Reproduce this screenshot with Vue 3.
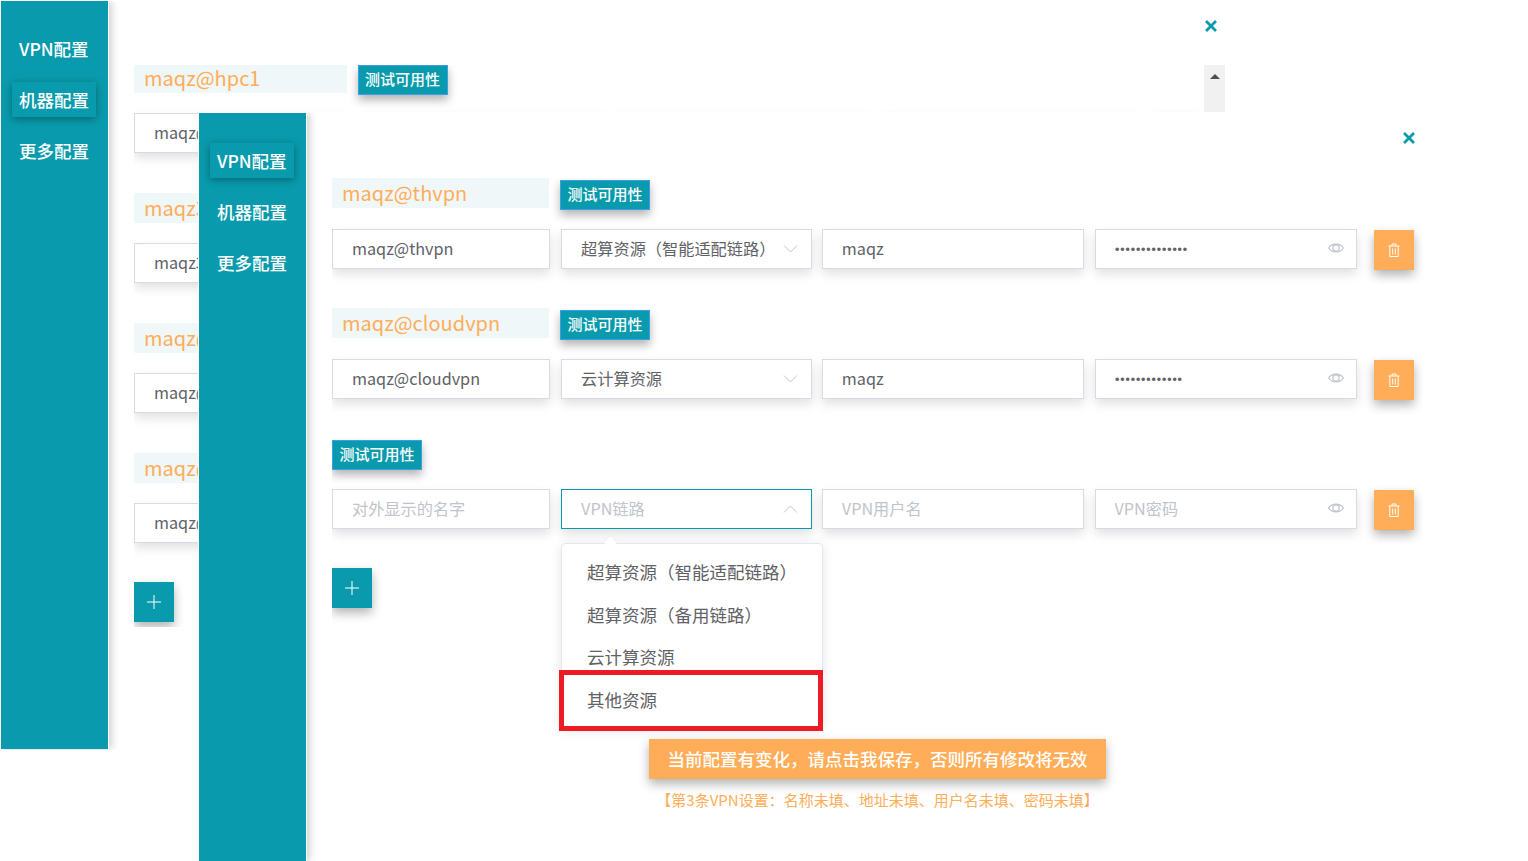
<template>
  <div class="desktop">
    <section v-for="win in windows" :key="win.id" class="win" :class="win.id">
      <aside class="sidebar">
        <div
          v-for="(tab, i) in tabs"
          :key="tab"
          class="tab"
          :class="{ active: i === win.activeTab }"
        >
          {{ tab }}
        </div>
      </aside>

      <div class="main">
        <header class="head">
          <svg class="close" viewBox="0 0 12 12" width="12" height="12">
            <path d="M1 1l10 10M11 1L1 11" fill="none" stroke="#099bad" stroke-width="2.800" />
          </svg>
        </header>

        <div class="scroller">
          <div class="content">
            <div v-for="row in win.rows" :key="row.id" class="row">
              <div class="row-head">
                <div v-if="row.name" class="title">{{ row.name }}</div>
                <button class="test-btn" type="button">测试可用性</button>
              </div>
              <div class="fields">
                <input class="field name" type="text" readonly :value="row.name" placeholder="对外显示的名字" />
                <div class="select-wrap">
                  <input
                    class="field"
                    :class="{ focused: row.open }"
                    type="text"
                    readonly
                    :value="row.link"
                    placeholder="VPN链路"
                  />
                  <svg class="chevron" viewBox="0 0 15 8" width="15" height="8">
                    <path :d="row.open ? 'M1 7.500L7.500 1l6.500 6.500' : 'M1 .5l6.500 6.500L14 .5'" fill="none" stroke="#c0c4cc" />
                  </svg>
                </div>
                <input class="field user" type="text" readonly :value="row.user" placeholder="VPN用户名" />
                <div class="pass-wrap">
                  <input class="field pass" type="password" readonly :value="row.pass" placeholder="VPN密码" />
                  <svg class="eye" viewBox="0 0 16 12" width="16" height="12">
                    <path d="M.6 6C4 .8 12 .8 15.400 6 12 11.200 4 11.200 .6 6z" fill="none" stroke="#c0c4cc" stroke-width="1.200" />
                    <circle cx="8" cy="6" r="3.200" fill="none" stroke="#c0c4cc" stroke-width="1.200" />
                  </svg>
                </div>
                <button class="del-btn" type="button">
                  <svg viewBox="0 0 12 14" width="12" height="14">
                    <path
                      d="M.5 3h11M4 3V1h4v2M1.800 3v10.500h8.400V3M4.700 5.500v6M7.300 5.500v6"
                      fill="none"
                      stroke="#fff"
                    />
                  </svg>
                </button>
              </div>
            </div>
            <button class="add-btn" type="button">
              <svg viewBox="0 0 14 14" width="14" height="14">
                <path d="M7 0v14M0 7h14" fill="none" stroke="#fff" />
              </svg>
            </button>
          </div>
          <div v-if="win.scrollbar" class="scrollbar"><i></i></div>
        </div>

        <div v-if="win.footer" class="footer">
          <button class="save-btn" type="button">当前配置有变化，请点击我保存，否则所有修改将无效</button>
          <p class="errors">【第3条VPN设置：名称未填、地址未填、用户名未填、密码未填】</p>
        </div>
      </div>

      <template v-if="win.footer">
        <ul class="dropdown">
          <li v-for="opt in linkOptions" :key="opt">{{ opt }}</li>
        </ul>
        <div class="highlight"></div>
      </template>
    </section>
  </div>
</template>

<script setup>
const tabs = ["VPN配置", "机器配置", "更多配置"];

const linkOptions = [
  "超算资源（智能适配链路）",
  "超算资源（备用链路）",
  "云计算资源",
  "其他资源",
];

const windows = [
  {
    id: "back",
    activeTab: 1,
    scrollbar: true,
    footer: false,
    rows: [
      { id: 1, name: "maqz@hpc1", link: "超算资源（智能适配链路）", user: "maqz", pass: "maqz12345678" },
      { id: 2, name: "maqz3", link: "超算资源（备用链路）", user: "maqz", pass: "maqz12345678" },
      { id: 3, name: "maqz@thvpn", link: "超算资源（智能适配链路）", user: "maqz", pass: "maqz12345678" },
      { id: 4, name: "maqz@cloudvpn", link: "云计算资源", user: "maqz", pass: "maqz12345678" },
    ],
  },
  {
    id: "front",
    activeTab: 0,
    scrollbar: false,
    footer: true,
    rows: [
      { id: 1, name: "maqz@thvpn", link: "超算资源（智能适配链路）", user: "maqz", pass: "maqz@thvpn1234" },
      { id: 2, name: "maqz@cloudvpn", link: "云计算资源", user: "maqz", pass: "maqz@cloud123" },
      { id: 3, name: "", link: "", user: "", pass: "", open: true },
    ],
  },
];
</script>

<style scoped>
.desktop {
  position: relative;
  height: 861px;
  overflow: hidden;
  background: #fff;
  font-family: "Noto Sans CJK SC", "Noto Sans", sans-serif;
}

.win {
  position: absolute;
  display: flex;
  align-items: flex-start;
  box-sizing: border-box;
  width: 1237px;
  height: 751px;
  overflow: hidden;
  border: 1px solid #fff;
  background: #fff;
}

.back {
  left: 0;
  top: 0;
}

.front {
  left: 198px;
  top: 112px;
}

.sidebar {
  flex: none;
  box-sizing: border-box;
  width: 108px;
  height: 748px;
  padding: 30px 12px 0 10.5px;
  border-right: 1px solid #fff;
  background: #099bad;
  background-clip: padding-box;
  box-shadow: 2px 0 8px rgba(0, 0, 0, 0.22);
}

.tab {
  height: 35px;
  margin-bottom: 16px;
  padding-left: 7.5px;
  line-height: 35px;
  font-size: 17.5px;
  font-weight: 500;
  color: #fff;
  white-space: nowrap;
}

.tab.active {
  box-shadow: 0 2px 8px rgba(0, 0, 0, 0.35);
}

.main {
  flex: 1;
  min-width: 0;
  padding: 0 11px 0 25px;
}

.head {
  display: flex;
  justify-content: flex-end;
  height: 64px;
  box-sizing: border-box;
  padding: 19px 8px 0 0;
}

.close {
  display: block;
}

.scroller {
  display: flex;
  height: 562px;
  overflow: hidden;
}

.content {
  flex: 1;
  min-width: 0;
  padding-top: 1px;
}

.back .content {
  margin-top: -4px;
}

.scrollbar {
  flex: none;
  width: 21px;
  background: #f1f1f1;
}

.scrollbar i {
  display: block;
  width: 0;
  margin: 9px auto 0;
  border: 5px solid transparent;
  border-top: 0;
  border-bottom-color: #505050;
}

.row {
  height: 106px;
  margin-bottom: 24px;
  overflow: hidden;
}

.row-head {
  display: flex;
  align-items: flex-start;
  box-sizing: border-box;
  height: 51px;
}

.back .row-head {
  padding-top: 1px;
}

.title {
  box-sizing: border-box;
  width: 19.9%;
  height: 30px;
  margin-right: 1%;
  padding-left: 10px;
  line-height: 29px;
  font-size: 20px;
  color: #ffad58;
  background: #f0f7f9;
  white-space: nowrap;
}

.test-btn {
  width: 90px;
  height: 30px;
  margin-top: 2px;
  padding: 0 0 3px;
  border: 1px solid #3b9ee6;
  font: 500 15px "Noto Sans CJK SC", sans-serif;
  color: #fff;
  background: #099bad;
  box-shadow: 0 5px 10px rgba(0, 0, 0, 0.3);
}

.fields {
  display: flex;
  align-items: flex-start;
}

.field {
  display: block;
  box-sizing: border-box;
  width: 100%;
  height: 40px;
  padding: 0 19px 2px;
  border: 1px solid #d8dbe3;
  outline: none;
  font: 16.2px "Noto Sans CJK SC", sans-serif;
  color: #606266;
  background: #fff;
  box-shadow: 0 5px 10px rgba(0, 0, 0, 0.12);
}

.field::placeholder {
  color: #c0c4cc;
}

.field.focused {
  border-color: #099bad;
}

.pass:not(:placeholder-shown) {
  padding-top: 4px;
  font: 700 14.5px Roboto, sans-serif;
}

.name {
  flex: none;
  width: 20%;
  margin-right: 1%;
}

.select-wrap {
  position: relative;
  flex: none;
  width: 23%;
  margin-right: 0.9%;
}

.chevron {
  position: absolute;
  right: 14px;
  top: 16px;
}

.user {
  flex: none;
  width: 24%;
  margin-right: 1%;
}

.pass-wrap {
  position: relative;
  flex: none;
  width: 24.05%;
  margin-right: 1.55%;
}

.eye {
  position: absolute;
  right: 13px;
  top: 13px;
}

.del-btn,
.add-btn {
  display: flex;
  align-items: center;
  justify-content: center;
  flex: none;
  width: 40px;
  height: 40px;
  padding: 0;
  border: 0;
  box-shadow: 0 5px 10px rgba(0, 0, 0, 0.3);
}

.del-btn {
  margin-top: 1px;
  background: #ffad58;
}

.add-btn {
  background: #099bad;
}

.footer {
  display: flex;
  flex-direction: column;
  align-items: center;
  width: 1091px;
}

.save-btn {
  width: 457px;
  height: 40px;
  padding: 0 0 2px;
  border: 0;
  font: 500 17.5px "Noto Sans CJK SC", sans-serif;
  color: #fff;
  background: #ffad58;
  box-shadow: 0 5px 10px rgba(0, 0, 0, 0.3);
}

.errors {
  margin: 10px 0 0;
  line-height: 22px;
  font-size: 15px;
  color: #ffad58;
}

.dropdown {
  position: absolute;
  left: 362px;
  top: 430px;
  box-sizing: border-box;
  width: 262px;
  margin: 0;
  padding: 7px 0 6px;
  list-style: none;
  border: 1px solid #e4e7ed;
  border-radius: 4px;
  background: #fff;
  box-shadow: 0 2px 12px rgba(0, 0, 0, 0.1);
}

.dropdown::before {
  content: "";
  position: absolute;
  left: 44px;
  top: -6px;
  width: 9px;
  height: 9px;
  background: #fff;
  box-shadow: -1px -1px 0 #ebeef5;
  transform: rotate(45deg);
}

.dropdown li {
  height: 42.7px;
  padding-left: 25px;
  line-height: 42px;
  font-size: 17.5px;
  color: #606266;
  white-space: nowrap;
}

.highlight {
  position: absolute;
  left: 360px;
  top: 557px;
  box-sizing: border-box;
  width: 264px;
  height: 61px;
  border: 5px solid #ed1c24;
}
</style>

<style>
html,
body {
  margin: 0;
  overflow: hidden;
}
</style>
